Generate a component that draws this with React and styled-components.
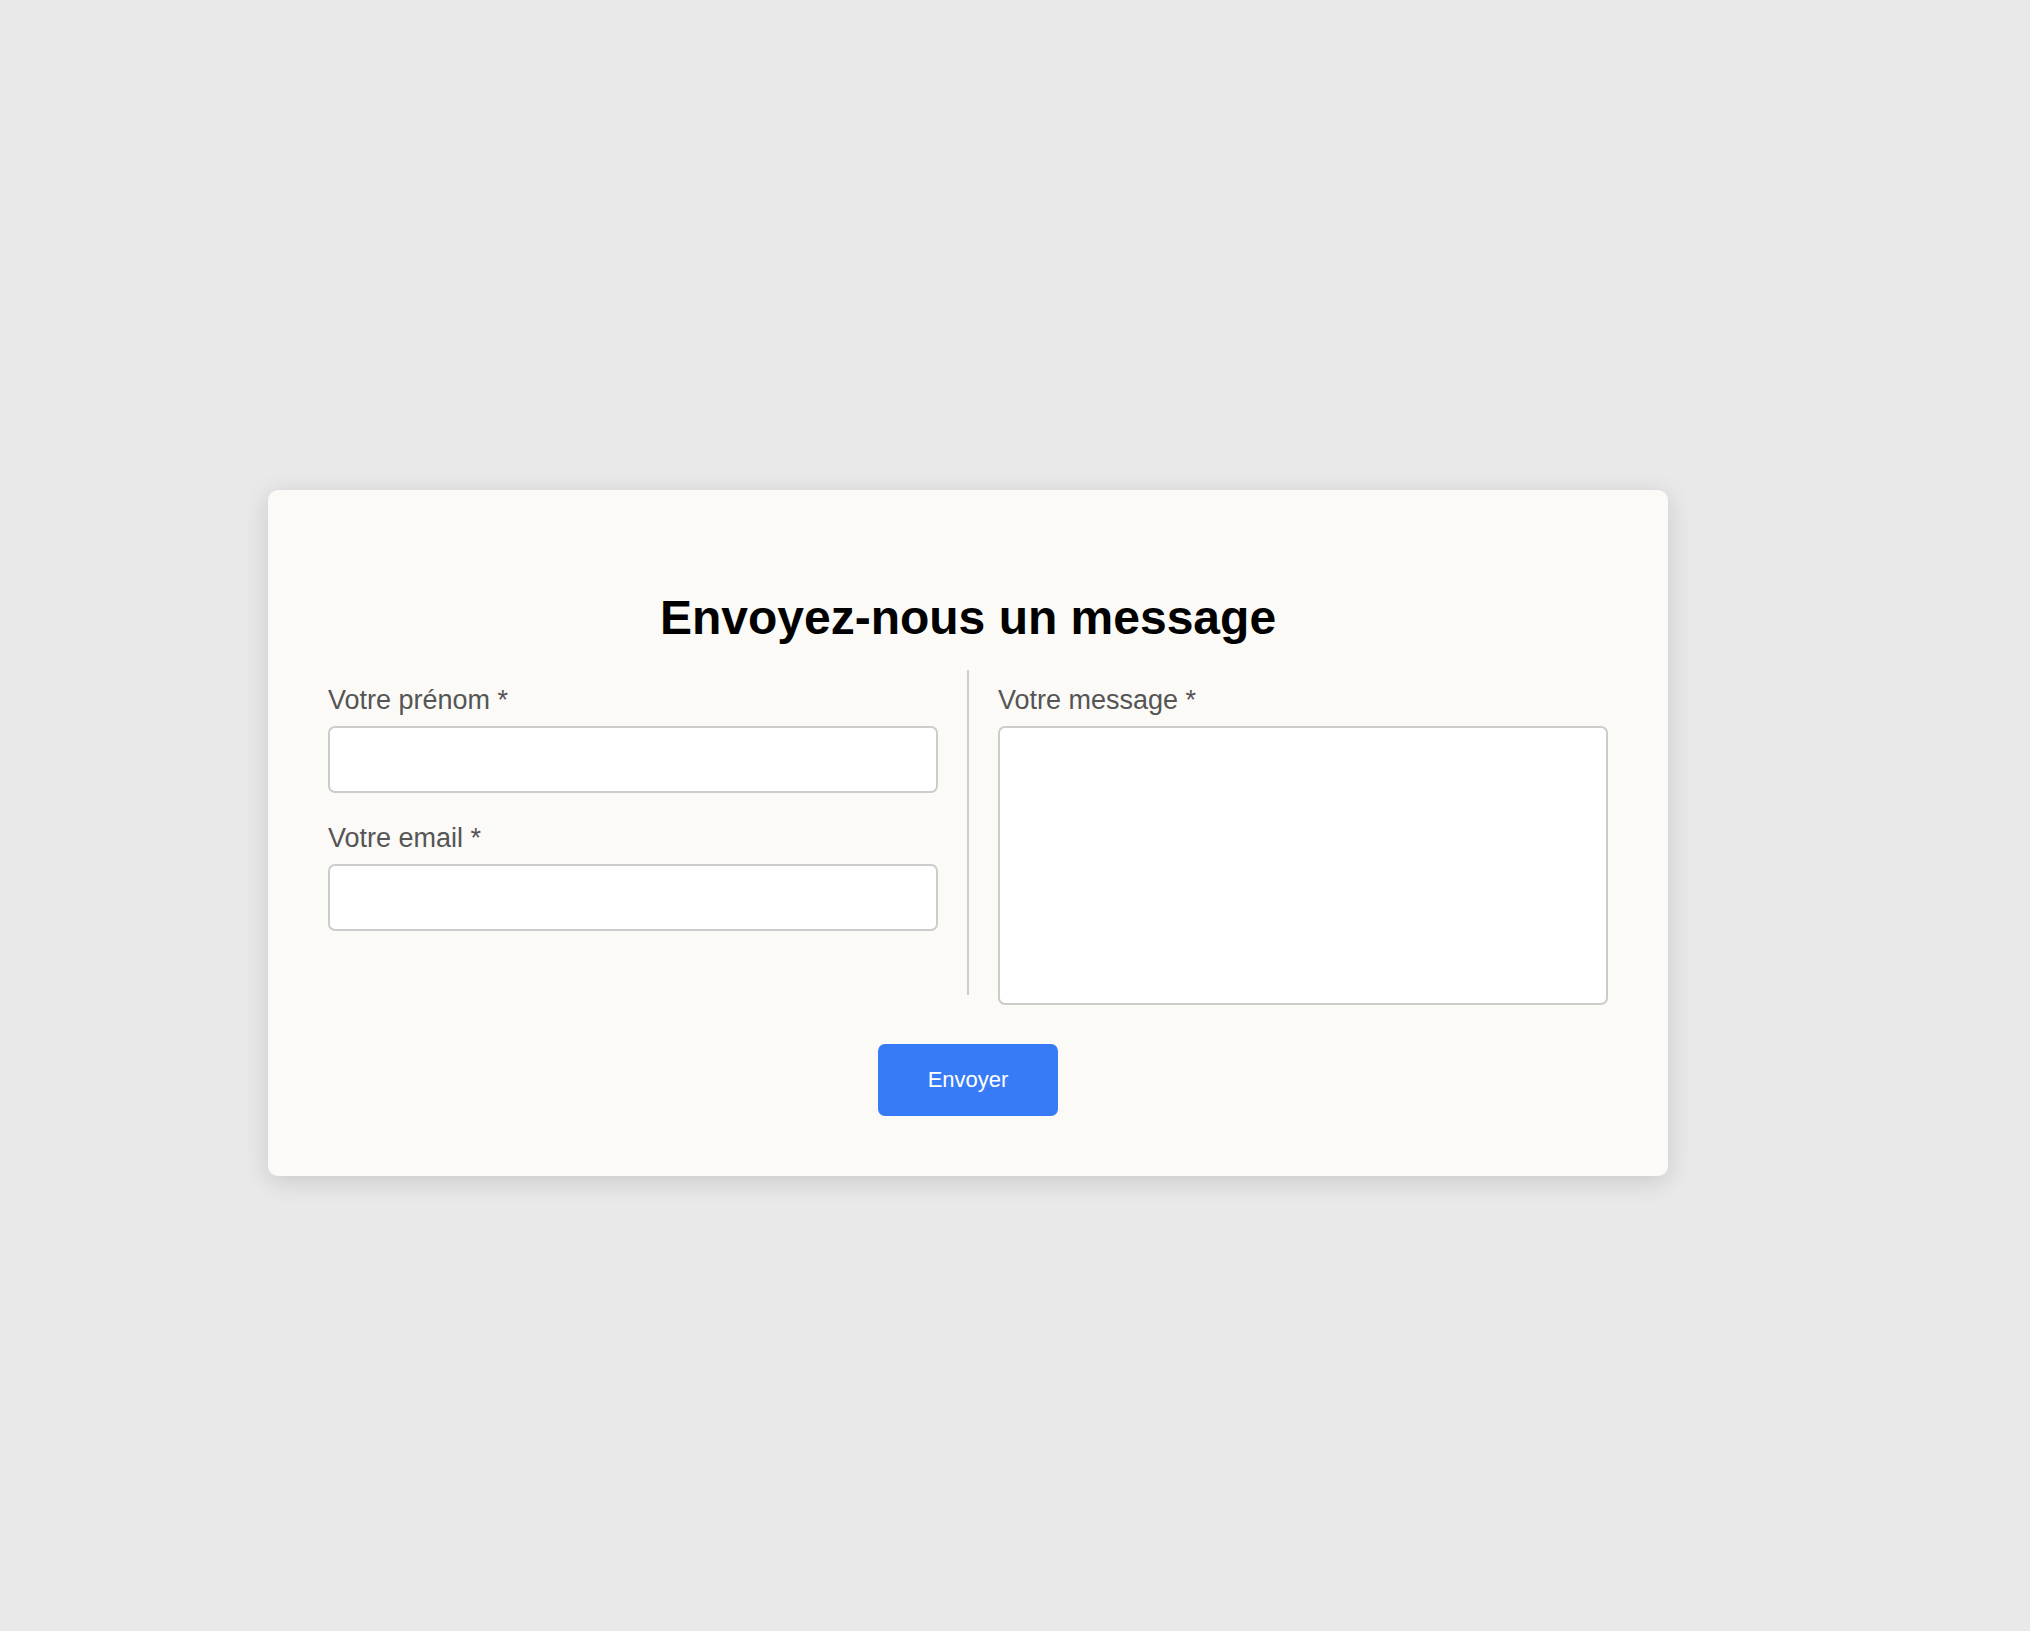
import React from 'react'
import styled, { createGlobalStyle } from 'styled-components'

const GlobalStyle = createGlobalStyle`
  html {
    background: #ffffff;
  }

  body {
    margin: 0;
    font-family: "Liberation Sans", Arial, sans-serif;
  }

  * {
    box-sizing: border-box;
  }
`

const Page = styled.div`
  display: flex;
  align-items: center;
  justify-content: center;
  min-height: 1631px;
  padding: 35px 94px 0 0;
  background: #e9e9e9;
`

const Card = styled.form`
  width: 1400px;
  padding: 60px;
  background: #fbfaf7;
  border-radius: 10px;
  box-shadow: 0 5px 26px rgba(0, 0, 0, 0.14);
`

const Title = styled.h2`
  margin: 40px 0 25px;
  text-align: center;
  font-size: 48px;
  font-weight: 700;
  color: #000;
`

const Columns = styled.div`
  display: grid;
  grid-template-columns: 610px 2px 1fr;
  column-gap: 29px;
  align-items: start;
`

const Column = styled.div`
  display: flex;
  flex-direction: column;
  gap: 30px;
  padding-top: 15px;
`

const Divider = styled.div`
  width: 2px;
  height: 325px;
  background: #cccccc;
`

const Field = styled.label`
  display: flex;
  flex-direction: column;
  gap: 10px;
`

const LabelText = styled.span`
  font-size: 27px;
  line-height: 31px;
  color: #555555;
`

const Input = styled.input`
  display: block;
  width: 100%;
  height: 67px;
  margin: 0;
  padding: 0 16px;
  font: inherit;
  font-size: 22px;
  background: #ffffff;
  border: 2px solid #cccccc;
  border-radius: 7px;
  outline: none;
`

const TextArea = styled(Input).attrs({ as: 'textarea' })`
  height: ${p => p.$height}px;
  padding: 16px;
  resize: none;
`

const Actions = styled.div`
  display: flex;
  justify-content: center;
  margin-top: 39px;
`

const SubmitButton = styled.button`
  width: 180px;
  height: 72px;
  border: none;
  border-radius: 7px;
  background: #387bf6;
  color: #ffffff;
  font-family: "Liberation Sans", Arial, sans-serif;
  font-size: 22px;
  cursor: pointer;
`

export default function App() {
  return (
    <>
      <GlobalStyle />
      <Page>
        <Card onSubmit={e => e.preventDefault()}>
          <Title>Envoyez-nous un message</Title>

          <Columns>
            <Column>
              <Field>
                <LabelText>Votre prénom *</LabelText>
                <Input type="text" />
              </Field>
              <Field>
                <LabelText>Votre email *</LabelText>
                <Input type="email" />
              </Field>
            </Column>

            <Divider />

            <Column>
              <Field>
                <LabelText>Votre message *</LabelText>
                <TextArea $height={279} />
              </Field>
            </Column>
          </Columns>

          <Actions>
            <SubmitButton type="submit">Envoyer</SubmitButton>
          </Actions>
        </Card>
      </Page>
    </>
  )
}
